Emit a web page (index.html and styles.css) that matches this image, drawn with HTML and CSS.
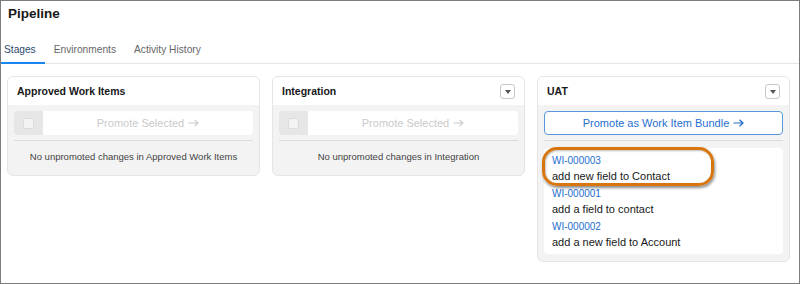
FILE: index.html
```html
<!DOCTYPE html>
<html>
<head>
<meta charset="utf-8">
<title>Pipeline</title>
<link rel="stylesheet" href="styles.css">
</head>
<body>
<div class="frame">
	<div class="pageTitle">Pipeline</div>
	<ul class="tabs">
		<li class="active">Stages</li>
		<li>Environments</li>
		<li>Activity History</li>
	</ul>
	<div class="stages">
		<div class="stage">
			<div class="stageHead">
				<span>Approved Work Items</span>
			</div>
			<div class="stageBody">
				<div class="promoteRow">
					<span class="checkCell"><i class="check"></i></span>
					<span class="promoteBtn">Promote Selected
						<svg class="arrow" width="11" height="8" viewBox="0 0 11 8"><path d="M0.5 4H10M6.5 0.8L10 4L6.5 7.2" fill="none" stroke="currentColor" stroke-width="1.1"/></svg>
					</span>
				</div>
				<div class="divider"></div>
				<div class="empty">No unpromoted changes in Approved Work Items</div>
			</div>
		</div>
		<div class="stage">
			<div class="stageHead">
				<span>Integration</span>
				<i class="menuBtn"></i>
			</div>
			<div class="stageBody">
				<div class="promoteRow">
					<span class="checkCell"><i class="check"></i></span>
					<span class="promoteBtn">Promote Selected
						<svg class="arrow" width="11" height="8" viewBox="0 0 11 8"><path d="M0.5 4H10M6.5 0.8L10 4L6.5 7.2" fill="none" stroke="currentColor" stroke-width="1.1"/></svg>
					</span>
				</div>
				<div class="divider"></div>
				<div class="empty">No unpromoted changes in Integration</div>
			</div>
		</div>
		<div class="stage">
			<div class="stageHead">
				<span>UAT</span>
				<i class="menuBtn"></i>
			</div>
			<div class="stageBody">
				<div class="bundleBtn">Promote as Work Item Bundle
					<svg class="arrow" width="11" height="8" viewBox="0 0 11 8"><path d="M0.5 4H10M6.5 0.8L10 4L6.5 7.2" fill="none" stroke="currentColor" stroke-width="1.2"/></svg>
				</div>
				<div class="divider"></div>
				<div class="workItems">
					<div class="workItem">
						<a>WI-000003</a>
						<p>add new field to Contact</p>
					</div>
					<div class="workItem">
						<a>WI-000001</a>
						<p>add a field to contact</p>
					</div>
					<div class="workItem">
						<a>WI-000002</a>
						<p>add a new field to Account</p>
					</div>
					<div class="callout"></div>
				</div>
			</div>
		</div>
	</div>
</div>
</body>
</html>
```
FILE: styles.css
```css
*{
	box-sizing: border-box;
}
body{
	margin: 0;
	font-family: "Liberation Sans", Arial, sans-serif;
	color: #181818;
}
.frame{
	width: 800px;
	height: 284px;
	border: 1px solid #7d7d7d;
	overflow: hidden;
}
.pageTitle{
	height: 33px;
	padding: 5px 0 0 7px;
	font-size: 13.5px;
	line-height: 16px;
	font-weight: bold;
}
.tabs{
	display: flex;
	margin: 0;
	padding: 0;
	list-style: none;
	border-bottom: 1px solid #e5e5e5;
	font-size: 10.2px;
	line-height: 12px;
	color: #666;
}
.tabs>li{
	padding: 10px 9px 6px 9px;
	border-bottom: 2px solid transparent;
	margin-bottom: -1px;
}
.tabs>li:first-child{
	padding-left: 3px;
}
.tabs>li.active{
	color: #2b4a6e;
	border-bottom-color: #1b86f0;
}
.stages{
	display: grid;
	grid-template-columns: repeat(3, 253px);
	gap: 12px;
	align-items: start;
	padding: 12px 0 0 6px;
}
.stage{
	background: #f3f3f3;
	border: 1px solid #e5e5e5;
	border-radius: 6px;
	overflow: hidden;
}
.stageHead{
	display: flex;
	align-items: center;
	justify-content: space-between;
	height: 28px;
	padding: 0 9px 0 9px;
	background: #fff;
	font-size: 10.5px;
	font-weight: bold;
}
.menuBtn{
	width: 15px;
	height: 15px;
	border: 1px solid #c9c9c9;
	border-radius: 3px;
	background: #fff;
	position: relative;
}
.menuBtn::after{
	content: "";
	position: absolute;
	left: 3.5px;
	top: 5px;
	border-left: 3px solid transparent;
	border-right: 3px solid transparent;
	border-top: 4px solid #555;
}
.stageBody{
	padding: 6px 6px 7px 6px;
}
.promoteRow{
	display: flex;
	height: 24px;
	border-radius: 4px;
	overflow: hidden;
}
.checkCell{
	width: 29px;
	background: #e6e6e6;
	display: flex;
	align-items: center;
	justify-content: center;
}
.check{
	width: 11px;
	height: 11px;
	background: #f3f3f3;
	border: 1px solid #dcdcdc;
	border-radius: 2px;
}
.promoteBtn{
	flex: 1;
	background: #fff;
	color: #cacaca;
	font-size: 11px;
	display: flex;
	align-items: center;
	justify-content: center;
}
.arrow{
	margin-left: 4px;
}
.divider{
	height: 1px;
	background: #dcdcdc;
	margin: 5px 0 0 0;
}
.empty{
	padding: 10px 0 5px 0;
	text-align: center;
	font-size: 9.5px;
	line-height: 12px;
	color: #444;
}
.bundleBtn{
	height: 24px;
	border: 1px solid #5b97dc;
	border-radius: 4px;
	background: #fff;
	color: #1f6fcf;
	font-size: 11px;
	display: flex;
	align-items: center;
	justify-content: center;
}
.workItems{
	position: relative;
	margin-top: 7px;
	padding: 6px 8px 1px 8px;
	background: #fff;
	border-radius: 4px;
}
.workItem{
	padding-bottom: 3px;
}
.workItem>a{
	display: block;
	color: #1f6fcf;
	font-size: 10px;
	line-height: 14px;
}
.workItem>p{
	margin: 0;
	font-size: 11px;
	line-height: 16px;
}
.callout{
	position: absolute;
	left: -2px;
	top: -1px;
	width: 172px;
	height: 39px;
	border: 3px solid #d9750f;
	border-radius: 15px;
	box-shadow: 1px 2px 3px rgba(0,0,0,0.45), inset 1px 1px 2px rgba(0,0,0,0.25);
}
```
